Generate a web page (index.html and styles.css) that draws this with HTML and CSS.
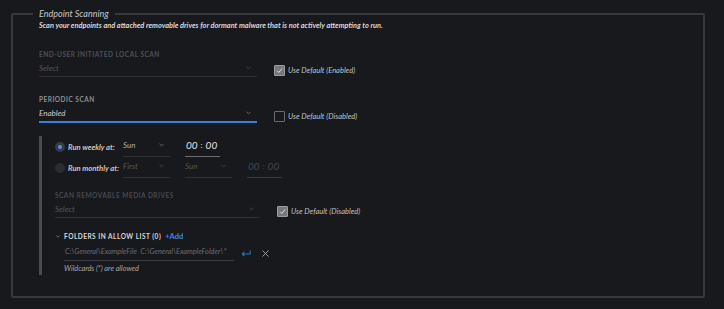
FILE: index.html
```html
<!doctype html>
<html lang="en">
  <head>
    <meta charset="UTF-8" />
    <meta name="viewport" content="width=device-width, initial-scale=1.0" />
    <title>Endpoint Scanning</title>
    <link rel="stylesheet" href="styles.css">
  </head>

  <body>
    <fieldset class="panel">
      <legend>Endpoint Scanning</legend>
      <p class="desc">Scan your endpoints and attached removable drives for dormant malware that is not actively attempting to run.</p>

      <div class="setting">
        <div class="field">
          <div class="label">End-user initiated local scan</div>
          <div class="select placeholder">
            <span>Select</span>
            <svg class="chev" viewBox="0 0 6 4"><path d="M0.5 0.5 L3 3 L5.5 0.5" /></svg>
          </div>
        </div>
        <label class="check checked">
          <span class="box"><svg viewBox="0 0 10 10"><path d="M2.2 5.2 L4.2 7.2 L7.8 2.8" /></svg></span>
          <span>Use Default (Enabled)</span>
        </label>
      </div>

      <div class="setting">
        <div class="field">
          <div class="label active">Periodic scan</div>
          <div class="select focused">
            <span>Enabled</span>
            <svg class="chev" viewBox="0 0 6 4"><path d="M0.5 0.5 L3 3 L5.5 0.5" /></svg>
          </div>
        </div>
        <label class="check">
          <span class="box"></span>
          <span>Use Default (Disabled)</span>
        </label>
      </div>

      <div class="sub">
        <div class="radio-row">
          <span class="radio on"></span>
          <span class="radio-label">Run weekly at:</span>
          <div class="select small">
            <span>Sun</span>
            <svg class="chev" viewBox="0 0 6 4"><path d="M0.5 0.5 L3 3 L5.5 0.5" /></svg>
          </div>
          <div class="time">00 <span class="colon">:</span> 00</div>
        </div>
        <div class="radio-row off">
          <span class="radio"></span>
          <span class="radio-label">Run monthly at:</span>
          <div class="select small placeholder">
            <span>First</span>
            <svg class="chev" viewBox="0 0 6 4"><path d="M0.5 0.5 L3 3 L5.5 0.5" /></svg>
          </div>
          <div class="select small placeholder">
            <span>Sun</span>
            <svg class="chev" viewBox="0 0 6 4"><path d="M0.5 0.5 L3 3 L5.5 0.5" /></svg>
          </div>
          <div class="time disabled">00 <span class="colon">:</span> 00</div>
        </div>

        <div class="setting media">
          <div class="field">
            <div class="label">Scan removable media drives</div>
            <div class="select placeholder">
              <span>Select</span>
              <svg class="chev" viewBox="0 0 6 4"><path d="M0.5 0.5 L3 3 L5.5 0.5" /></svg>
            </div>
          </div>
          <label class="check checked">
            <span class="box"><svg viewBox="0 0 10 10"><path d="M2.2 5.2 L4.2 7.2 L7.8 2.8" /></svg></span>
            <span>Use Default (Disabled)</span>
          </label>
        </div>

        <div class="allow-head">
          <svg class="chev small-chev" viewBox="0 0 6 4"><path d="M0.5 0.5 L3 3 L5.5 0.5" /></svg>
          <span class="allow-title">Folders in allow list (0)</span>
          <a class="add">+Add</a>
        </div>
        <div class="allow-row">
          <div class="allow-input">C:\General\ExampleFile&nbsp; C:\General\ExampleFolder\*</div>
          <svg class="enter" viewBox="0 0 12 8"><path d="M11 0.5 V4.5 H1.5 M4 2 L1.5 4.5 L4 7" /></svg>
          <svg class="close" viewBox="0 0 8 8"><path d="M0.5 0.5 L7.5 7.5 M7.5 0.5 L0.5 7.5" /></svg>
        </div>
        <p class="hint">Wildcards (*) are allowed</p>
      </div>
    </fieldset>
  </body>
</html>
```

FILE: styles.css
```css
* {
  margin: 0;
  padding: 0;
  box-sizing: border-box;
  font-family: 'Lato', 'Liberation Sans', sans-serif;
}

body {
  background-color: #18191d;
  padding: 8px 19px 0 11px;
  height: 309px;
  overflow: hidden;
}

.panel {
  border: 2px solid #38393d;
  border-radius: 2px;
  padding: 0 20px 0 26px;
  height: 290px;
}

legend {
  font-size: 9px;
  line-height: 12px;
  font-style: italic;
  color: #c4c5c8;
  padding: 0 6px;
  margin-left: -6px;
}

.desc {
  font-size: 7.4px;
  line-height: 12px;
  font-weight: 700;
  font-style: italic;
  color: #d6d7da;
}

.setting {
  display: flex;
  align-items: flex-end;
  gap: 17px;
  margin-top: 18px;
}

.field {
  width: 218px;
}

.label {
  font-size: 6.5px;
  line-height: 10px;
  font-weight: 700;
  letter-spacing: 0.5px;
  text-transform: uppercase;
  color: #4f5054;
}

.label.active {
  color: #8d8e92;
}

.select {
  display: flex;
  align-items: center;
  justify-content: space-between;
  height: 17px;
  padding: 0 6px 1px 0;
  border-bottom: 1px solid #2f3034;
  font-size: 8px;
  font-style: italic;
  color: #a9aaae;
}

.select.placeholder {
  color: #55565a;
}

.select.focused {
  color: #c9cacd;
  height: 18px;
  border-bottom: 2px solid #3b7fde;
}

.chev {
  width: 5px;
  height: 4px;
  fill: none;
  stroke: #77787c;
  stroke-width: 1;
}

.placeholder .chev {
  stroke: #4a4b4f;
}

.check {
  display: flex;
  align-items: center;
  gap: 3px;
  margin-bottom: 1px;
  font-size: 7.5px;
  font-style: italic;
  color: #bfc0c3;
}

.box {
  width: 11px;
  height: 11px;
  border: 1px solid #6a6b6f;
  border-radius: 1px;
  display: flex;
  align-items: center;
  justify-content: center;
}

.check.checked .box {
  background-color: #77787c;
  border-color: #9c9da1;
}

.box svg {
  width: 9px;
  height: 9px;
  fill: none;
  stroke: #e2e3e6;
  stroke-width: 1;
}

.sub {
  margin-top: 13px;
  border-left: 3px solid #4a4b4f;
  padding: 0 0 0 13px;
}

.radio-row {
  display: flex;
  align-items: center;
  height: 21px;
}

.radio {
  width: 10px;
  height: 10px;
  border-radius: 50%;
  background-color: #3a3b40;
  display: flex;
  align-items: center;
  justify-content: center;
  flex-shrink: 0;
  margin-right: 3px;
}

.radio.on::after {
  content: '';
  width: 4px;
  height: 4px;
  border-radius: 50%;
  background-color: #4b91f1;
}

.radio-row.off .radio {
  background-color: #2b2c31;
}

.radio-label {
  width: 55px;
  font-size: 7.6px;
  font-weight: 700;
  font-style: italic;
  color: #c6c7ca;
  white-space: nowrap;
}

.select.small {
  width: 47px;
  height: 21px;
  padding-bottom: 2px;
  margin-right: 15px;
}

.time {
  width: 35px;
  height: 21px;
  display: flex;
  align-items: center;
  padding: 0 0 2px 1px;
  border-bottom: 1px solid #6b6c70;
  font-size: 10px;
  font-style: italic;
  color: #e0e1e4;
  white-space: nowrap;
}

.time .colon {
  font-style: normal;
  font-size: 8px;
  padding: 0 3px;
}

.time.disabled {
  color: #44454a;
  border-bottom-color: #3a3b3f;
}

.setting.media {
  margin-top: 13px;
}

.media .field {
  width: 205px;
}

.media .label {
  color: #47484c;
}

.allow-head {
  display: flex;
  align-items: center;
  margin-top: 13px;
  height: 10px;
}

.small-chev {
  width: 4px;
  height: 3px;
  margin: 0 4px 0 1px;
  stroke: #9a9b9f;
}

.allow-title {
  font-size: 6.5px;
  font-weight: 700;
  letter-spacing: 0.5px;
  text-transform: uppercase;
  color: #d6d7da;
}

.add {
  margin-left: 4px;
  font-size: 7.5px;
  font-weight: 700;
  color: #3d86f0;
}

.allow-row {
  display: flex;
  align-items: center;
  margin-top: 5px;
  padding-left: 9px;
}

.allow-input {
  width: 170px;
  height: 15px;
  padding: 0 0 3px 1px;
  border-bottom: 1px solid #3c3d41;
  font-size: 7.3px;
  line-height: 12px;
  font-style: italic;
  color: #6a6b6f;
  white-space: nowrap;
}

.enter {
  width: 10px;
  height: 7px;
  margin-left: 7px;
  fill: none;
  stroke: #2f6fcb;
  stroke-width: 1.3;
}

.close {
  width: 7px;
  height: 7px;
  margin-left: 11px;
  fill: none;
  stroke: #a9aaae;
  stroke-width: 1;
}

.hint {
  padding-left: 9px;
  margin-top: 2px;
  font-size: 7.3px;
  line-height: 12px;
  font-style: italic;
  color: #a5a6aa;
}
```
